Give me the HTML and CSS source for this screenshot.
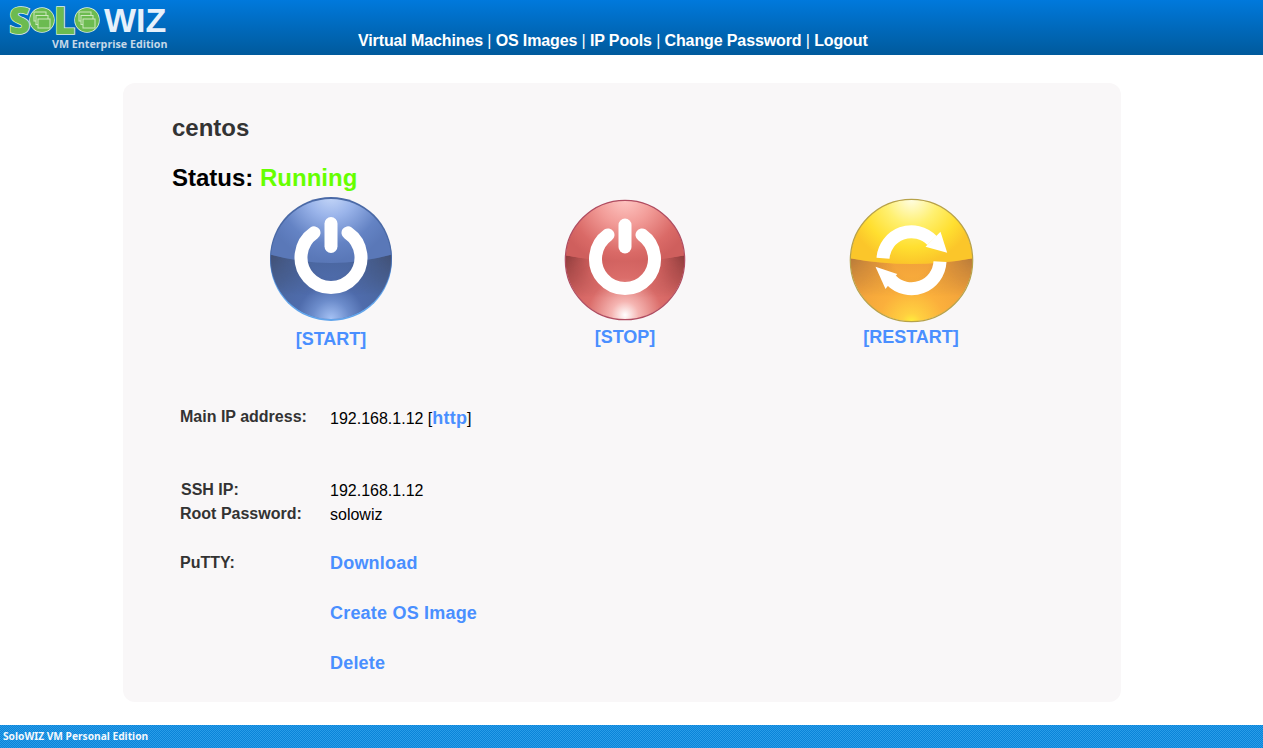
FILE: index.html
```html
<!DOCTYPE html>
<html>
<head>
<meta charset="utf-8">
<title>SoloWIZ</title>
<link rel="stylesheet" href="styles.css">
</head>
<body>
<header class="topbar">
 <div class="logo">
  <svg width="172" height="55" viewBox="0 0 172 55">
   <defs>
    <g id="winstack" fill="#6CBB50" stroke="#CDE8BE" stroke-width="1">
     <rect x="-8" y="-8" width="12" height="9"/>
     <rect x="-6" y="-4.5" width="12" height="9"/>
     <rect x="-4" y="-1" width="12" height="9"/>
    </g>
   </defs>
   <g class="logo-green">
    <text x="9" y="34" font-size="37">S</text>
    <circle cx="42" cy="20" r="12"/>
    <text x="54" y="34" font-size="37">L</text>
    <circle cx="87" cy="20" r="12"/>
   </g>
   <use href="#winstack" x="42" y="20"/>
   <use href="#winstack" x="87" y="20"/>
   <text class="logo-wiz" x="104" y="32" font-size="34">WIZ</text>
   <text class="logo-sub" x="52" y="48" font-size="10.7">VM Enterprise Edition</text>
  </svg>
 </div>
 <nav class="mainnav">
  <a href="#">Virtual Machines</a> | <a href="#">OS Images</a> | <a href="#">IP Pools</a> | <a href="#">Change Password</a> | <a href="#">Logout</a>
 </nav>
</header>

<main class="card">
 <h1 class="vmname">centos</h1>
 <h2 class="status">Status: <span class="running">Running</span></h2>

 <div class="actions">
  <a href="#" class="action start">
   <svg width="126" height="126" viewBox="0 0 126 126">
    <defs>
     <radialGradient id="blueTop" gradientUnits="userSpaceOnUse" cx="63" cy="-4" r="68">
      <stop offset="0" stop-color="#CADBFA"/>
      <stop offset="0.35" stop-color="#9AB4EA"/>
      <stop offset="0.75" stop-color="#6483C4"/>
      <stop offset="1" stop-color="#5A78B8"/>
     </radialGradient>
     <radialGradient id="blueLow" gradientUnits="userSpaceOnUse" cx="63" cy="122" r="62">
      <stop offset="0" stop-color="#A6C2F5"/>
      <stop offset="0.3" stop-color="#6C8CCB"/>
      <stop offset="0.55" stop-color="#4F6CAC"/>
      <stop offset="1" stop-color="#4A669F"/>
     </radialGradient>
     <radialGradient id="blueEdge" gradientUnits="userSpaceOnUse" cx="63" cy="58" r="62">
      <stop offset="0.35" stop-color="#3F4A68" stop-opacity="0"/>
      <stop offset="1" stop-color="#3F4A68" stop-opacity="0.85"/>
     </radialGradient>
     <linearGradient id="fadeDown" gradientUnits="userSpaceOnUse" x1="0" y1="56" x2="0" y2="98">
      <stop offset="0" stop-color="#FFF"/>
      <stop offset="1" stop-color="#000"/>
     </linearGradient>
     <mask id="bandFade" maskUnits="userSpaceOnUse" x="0" y="0" width="126" height="126">
      <rect width="126" height="126" fill="url(#fadeDown)"/>
     </mask>
     <clipPath id="clipA"><circle cx="63" cy="62" r="60"/></clipPath>
    </defs>
    <circle cx="63" cy="63" r="61" fill="#62A4EA"/>
    <circle cx="63" cy="61" r="61" fill="#4A69A6"/>
    <g clip-path="url(#clipA)">
     <rect width="126" height="126" fill="url(#blueLow)"/>
     <path d="M0 57Q63 75 126 57V100H0Z" fill="url(#blueEdge)" mask="url(#bandFade)"/>
     <path d="M0 0H126V57Q63 75 0 57Z" fill="url(#blueTop)"/>
    </g>
    <path class="glyph" d="M46 35.8A30 30 0 1 0 80 35.8"/>
    <path class="glyph" d="M63 26.5V49.5"/>
   </svg>
   <span>[START]</span>
  </a>
  <a href="#" class="action stop">
   <svg width="122" height="122" viewBox="0 0 122 122">
    <defs>
     <radialGradient id="redTop" gradientUnits="userSpaceOnUse" cx="61" cy="-2" r="70">
      <stop offset="0" stop-color="#FFC9C5"/>
      <stop offset="0.4" stop-color="#F29C98"/>
      <stop offset="0.8" stop-color="#DA6A67"/>
      <stop offset="1" stop-color="#CF5F5D"/>
     </radialGradient>
     <radialGradient id="redLow" gradientUnits="userSpaceOnUse" cx="61" cy="116" r="62">
      <stop offset="0" stop-color="#FFFFFF"/>
      <stop offset="0.22" stop-color="#F5B5B2"/>
      <stop offset="0.6" stop-color="#DB6D6A"/>
      <stop offset="1" stop-color="#CF5F5D"/>
     </radialGradient>
     <radialGradient id="redEdge" gradientUnits="userSpaceOnUse" cx="61" cy="60" r="60">
      <stop offset="0.55" stop-color="#7E3434" stop-opacity="0"/>
      <stop offset="1" stop-color="#7E3434" stop-opacity="0.85"/>
     </radialGradient>
     <clipPath id="clipB"><circle cx="61" cy="61" r="59.5"/></clipPath>
    </defs>
    <g clip-path="url(#clipB)">
     <rect width="122" height="122" fill="url(#redLow)"/>
     <path d="M0 56Q61 68 122 56V100H0Z" fill="url(#redEdge)" mask="url(#bandFade)"/>
     <path d="M0 0H122V56Q61 68 0 56Z" fill="url(#redTop)"/>
    </g>
    <circle cx="61" cy="61" r="59.7" fill="none" stroke="#B04C60" stroke-width="1.2"/>
    <path class="glyph" d="M44 35.9A29.5 29.5 0 1 0 78 35.9"/>
    <path class="glyph" d="M61 26V48"/>
   </svg>
   <span>[STOP]</span>
  </a>
  <a href="#" class="action restart">
   <svg width="125" height="125" viewBox="0 0 125 125">
    <defs>
     <radialGradient id="yelTop" gradientUnits="userSpaceOnUse" cx="62.5" cy="0" r="66">
      <stop offset="0" stop-color="#FFFEE8"/>
      <stop offset="0.4" stop-color="#FFF070"/>
      <stop offset="0.75" stop-color="#FFDF30"/>
      <stop offset="1" stop-color="#FBC62A"/>
     </radialGradient>
     <radialGradient id="yelLow" gradientUnits="userSpaceOnUse" cx="62.5" cy="125" r="66">
      <stop offset="0" stop-color="#FFF23C"/>
      <stop offset="0.15" stop-color="#FFD040"/>
      <stop offset="0.5" stop-color="#FBB03C"/>
      <stop offset="1" stop-color="#F0A03A"/>
     </radialGradient>
     <radialGradient id="yelEdge" gradientUnits="userSpaceOnUse" cx="62.5" cy="60" r="62">
      <stop offset="0.3" stop-color="#A8703A" stop-opacity="0"/>
      <stop offset="1" stop-color="#A8703A" stop-opacity="0.9"/>
     </radialGradient>
     <clipPath id="clipC"><circle cx="62.5" cy="62.5" r="61"/></clipPath>
    </defs>
    <g clip-path="url(#clipC)">
     <rect width="125" height="125" fill="url(#yelLow)"/>
     <path d="M0 60Q62 72 125 60V100H0Z" fill="url(#yelEdge)" mask="url(#bandFade)"/>
     <path d="M0 0H125V60Q62 72 0 60Z" fill="url(#yelTop)"/>
    </g>
    <circle cx="62.5" cy="62.5" r="61.2" fill="none" stroke="#B7A24A" stroke-width="1.2"/>
    <path class="glyph flat" d="M34 60.3A28.5 28.5 0 0 1 83 42.5"/>
    <path class="glyph flat" d="M91 63.7A28.5 28.5 0 0 1 42 82"/>
    <path class="arrow" d="M91.5 33.7L98.2 54.7L76.5 48.7Z"/>
    <path class="arrow" d="M26.5 68.7L48.2 76L36.5 91Z"/>
   </svg>
   <span>[RESTART]</span>
  </a>
 </div>

 <div class="details">
  <div class="row main-ip"><b>Main IP address:</b><span>192.168.1.12 [<a href="#">http</a>]</span></div>
  <div class="row ssh-ip"><b class="nudge">SSH IP:</b><span>192.168.1.12</span></div>
  <div class="row rootpw"><b>Root Password:</b><span>solowiz</span></div>
  <div class="row link-row putty"><b>PuTTY:</b><a href="#">Download</a></div>
  <div class="row link-row"><b></b><a href="#">Create OS Image</a></div>
  <div class="row link-row"><b></b><a href="#">Delete</a></div>
 </div>
</main>

<footer class="bottombar">SoloWIZ VM Personal Edition</footer>
</body>
</html>
```

FILE: styles.css
```css
html, body {
 height: 100%;
}
body {
 background: #FFF;
 color: #000;
 display: flex;
 flex-direction: column;
 font-family: "Liberation Sans", Arial, sans-serif;
 margin: 0;
 overflow: hidden;
}
a {
 color: #4A8FFF;
 text-decoration: none;
}

/* top bar */
.topbar {
 background: linear-gradient(#0079DC, #005A9C);
 display: flex;
 flex: none;
 height: 55px;
}
.logo {
 flex: none;
 height: 55px;
 width: 358px;
}
.logo svg {
 display: block;
}
.logo text {
 font-family: "Open Sans", "Liberation Sans", sans-serif;
 font-weight: 800;
}
.logo-green {
 fill: #6CBB50;
 paint-order: stroke;
 stroke: #E4F2E4;
 stroke-width: 1.5;
}
.logo .logo-wiz {
 fill: #E6F1FB;
 font-family: "Liberation Sans", sans-serif;
 font-weight: bold;
}
.logo .logo-sub {
 fill: #C6D8E8;
 font-weight: 700;
}
.mainnav {
 color: #FFF;
 font-size: 16px;
 letter-spacing: -0.12px;
 line-height: 18px;
 padding-top: 32px;
}
.mainnav a {
 color: #FFF;
 font-weight: bold;
}

/* card */
.card {
 background: #F9F7F8;
 border-radius: 12px;
 box-sizing: border-box;
 flex: none;
 height: 619px;
 margin: 28px 0 23px 123px;
 padding: 31px 49px 0;
 width: 998px;
}
.vmname {
 color: #333;
 font-size: 24px;
 line-height: 28px;
 margin: 0;
}
.status {
 font-size: 24px;
 line-height: 28px;
 margin: 22px 0 0;
}
.running {
 color: #66FF00;
}

/* start stop restart */
.actions {
 display: grid;
 grid-template-columns: 318px 270px 302px;
 margin-top: 5px;
}
.action {
 align-items: center;
 display: flex;
 flex-direction: column;
 font-size: 18px;
 font-weight: bold;
 line-height: 20px;
}
.action svg {
 display: block;
}
.start span {
 margin-top: 6px;
}
.stop svg {
 margin-top: 2px;
}
.stop span {
 margin-top: 6px;
}
.restart svg {
 margin-top: 1px;
}
.restart span {
 margin-top: 4px;
}
.glyph {
 fill: none;
 stroke: #FFF;
 stroke-linecap: round;
 stroke-width: 13;
}
.glyph.flat {
 stroke-linecap: butt;
}
.arrow {
 fill: #FFF;
}

/* info rows */
.details {
 margin-top: 56px;
 padding-left: 8px;
}
.row {
 align-items: start;
 display: grid;
 font-size: 16px;
 grid-template-columns: 150px 1fr;
 height: 24px;
 line-height: 24px;
}
.row b {
 color: #333;
}
.row span {
 padding-top: 1px;
}
.row a {
 font-size: 18px;
 font-weight: bold;
 letter-spacing: 0.2px;
}
.nudge {
 padding-left: 1px;
}
.ssh-ip {
 margin-top: 49px;
}
.link-row {
 height: 50px;
}
.putty {
 margin-top: 25px;
}

/* footer */
.bottombar {
 background-color: #1590E2;
 background-image: repeating-conic-gradient(#2A9CE8 0 25%, #0A84D8 0 50%);
 background-size: 2px 2px;
 color: #F2F8FD;
 flex: 1;
 font-family: "Noto Sans", "Open Sans", sans-serif;
 font-size: 10.2px;
 font-weight: 700;
 line-height: 23px;
 padding-left: 3px;
}
```
